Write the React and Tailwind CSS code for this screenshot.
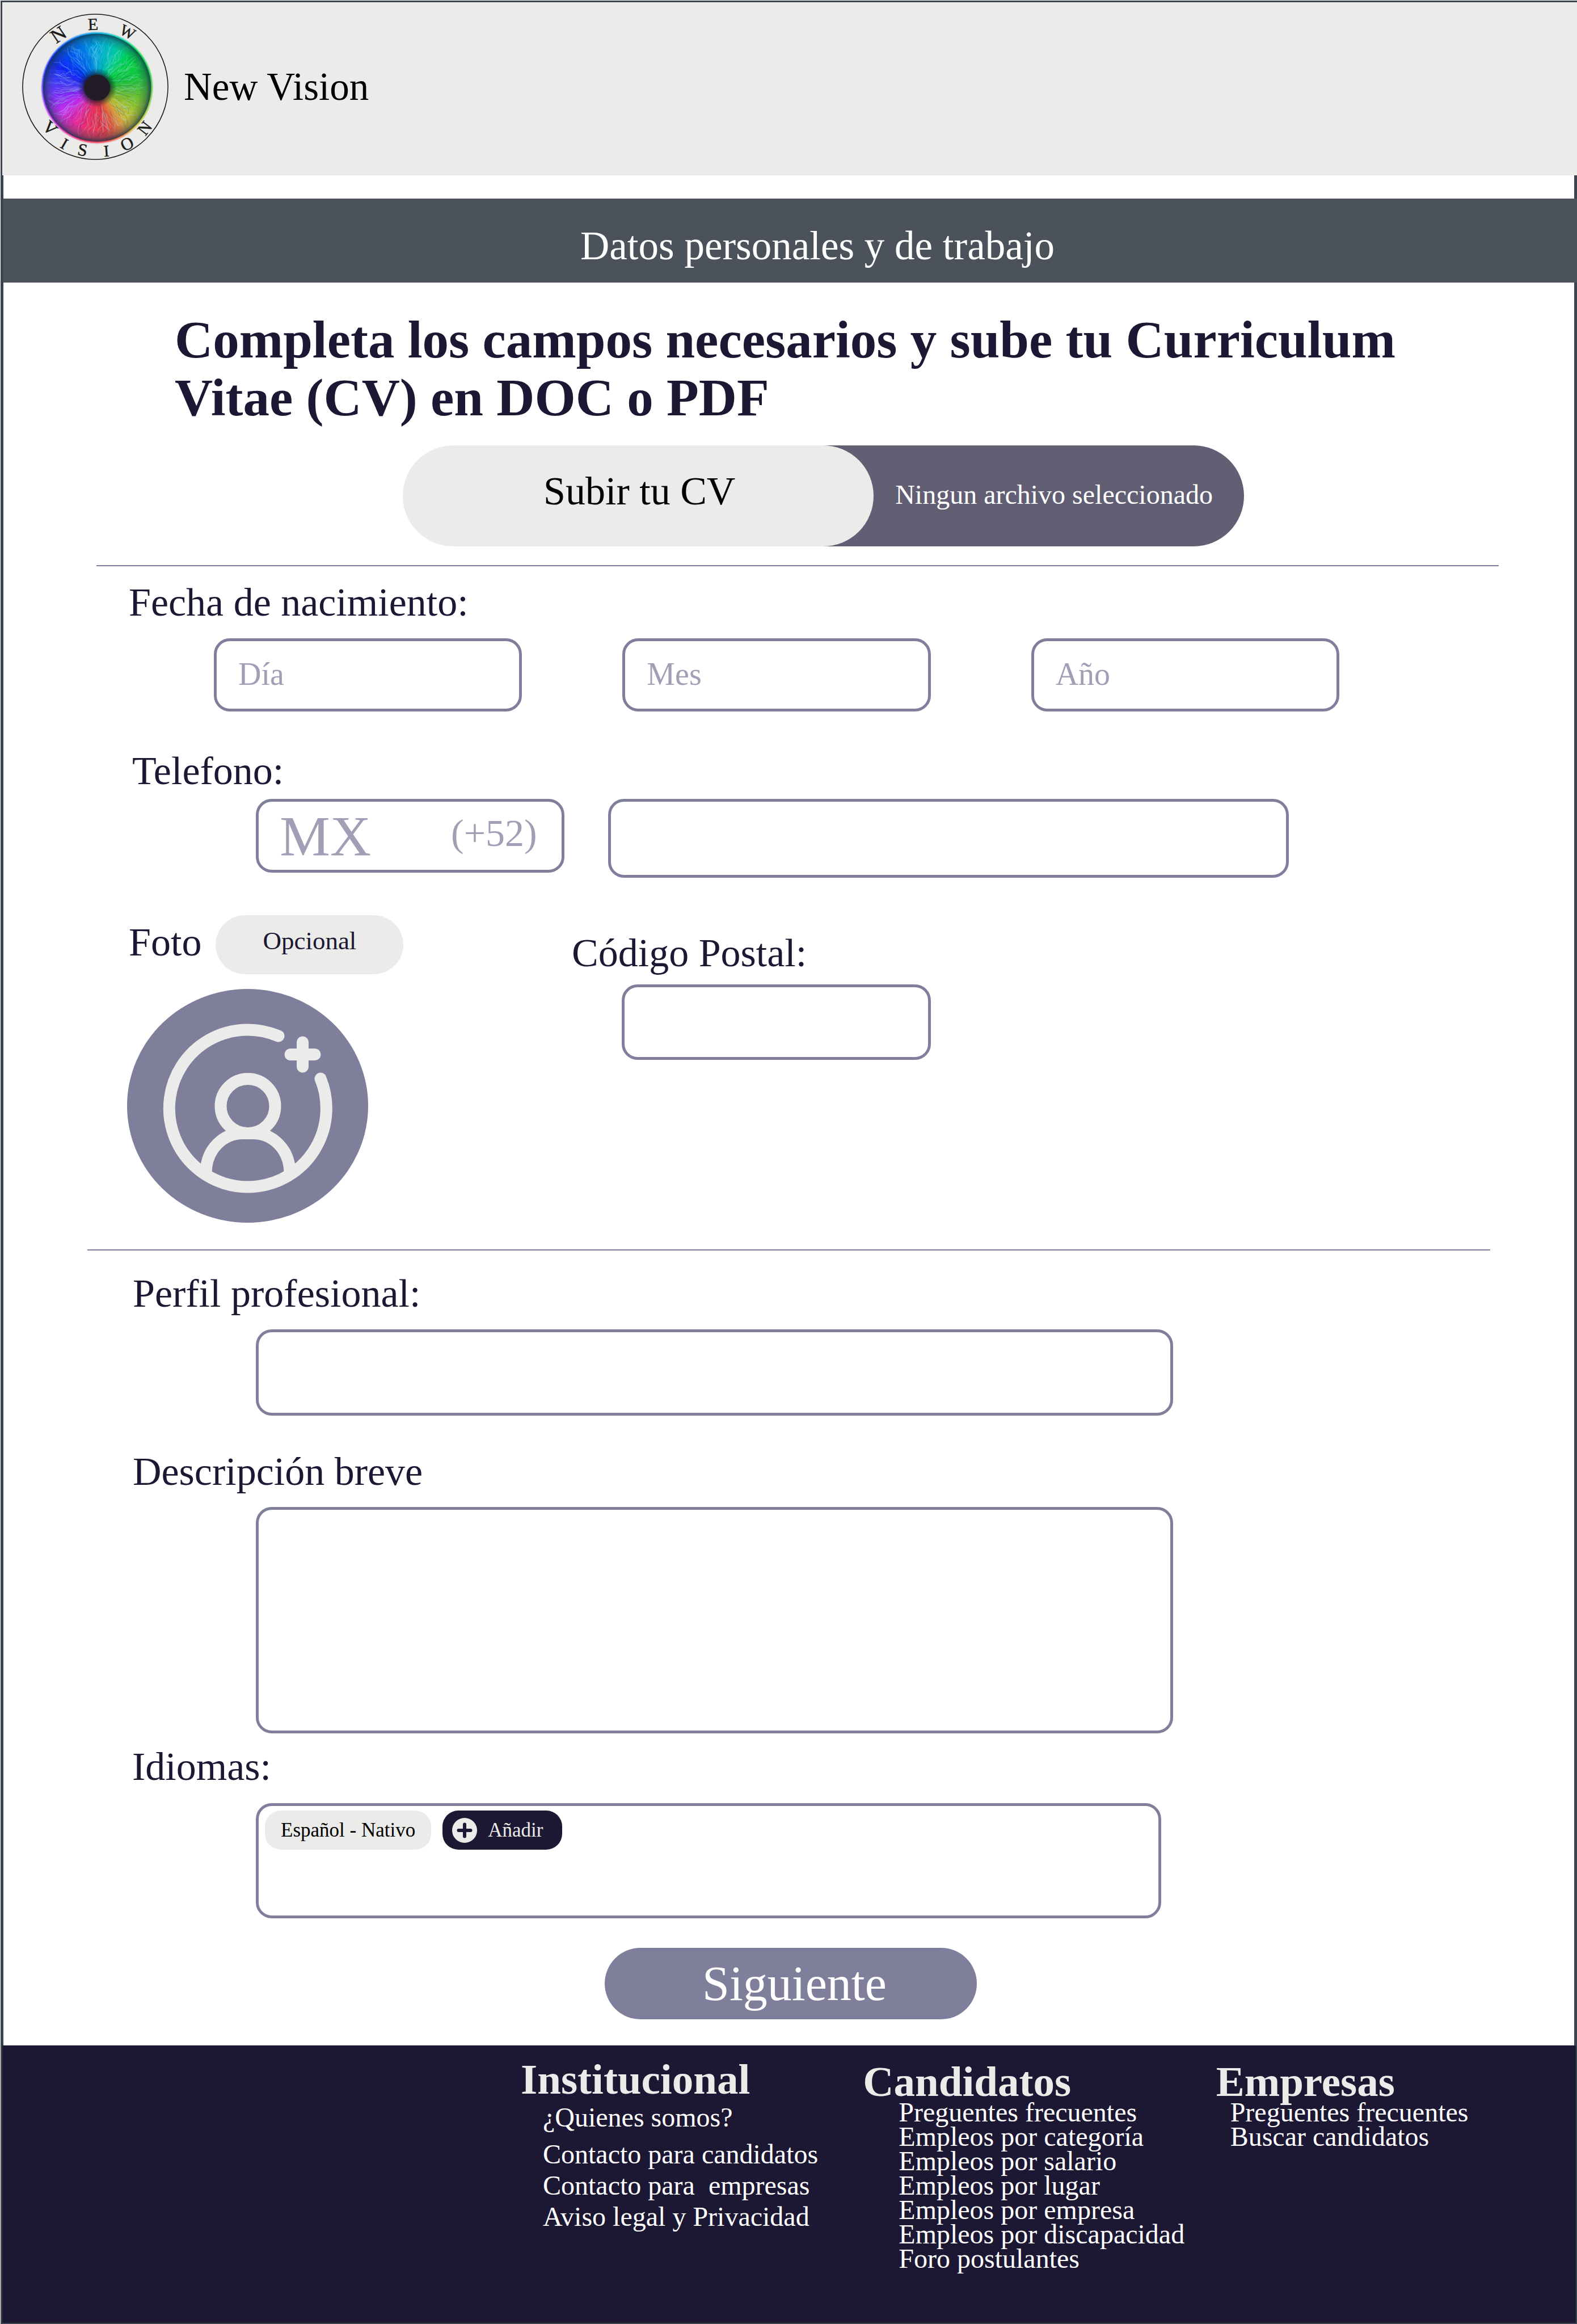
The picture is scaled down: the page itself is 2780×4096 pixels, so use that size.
import React from "react";

const FIELD =
  "block w-full rounded-[28px] border-[5px] border-[#7f7f9b] bg-white text-[#1c1733] placeholder:text-[#a09fb6] placeholder:opacity-100 outline-none";
const LABEL = "block text-[70px] leading-[80px] text-[#1c1733]";

const HUES = [
  [0, 0, 170, 225],
  [25, 0, 205, 175],
  [50, 0, 220, 70],
  [75, 20, 200, 60],
  [100, 100, 195, 50],
  [120, 160, 200, 40],
  [138, 215, 190, 50],
  [152, 235, 130, 60],
  [168, 242, 66, 70],
  [195, 244, 48, 105],
  [215, 235, 45, 170],
  [237, 205, 45, 245],
  [257, 140, 44, 255],
  [277, 76, 60, 255],
  [300, 16, 40, 255],
  [325, 0, 90, 245],
  [360, 0, 170, 225],
];

function hueAt(deg) {
  const a = ((deg % 360) + 360) % 360;
  const i = HUES.findIndex((h, n) => n > 0 && a <= h[0]);
  const lo = HUES[i - 1];
  const hi = HUES[i];
  const t = (a - lo[0]) / (hi[0] - lo[0]);
  const mix = (k) => Math.round(lo[k] + (hi[k] - lo[k]) * t);
  return `rgb(${mix(1)},${mix(2)},${mix(3)})`;
}

const CX = 487;
const CY = 467;

function point(deg, r) {
  const a = ((deg - 90) * Math.PI) / 180;
  return `${(CX + r * Math.cos(a)).toFixed(1)} ${(CY + r * Math.sin(a)).toFixed(1)}`;
}

const WEDGES = Array.from({ length: 120 }, (_, i) => ({
  d: `M${CX} ${CY}L${point(i * 3 - 0.6, 314)}L${point(i * 3 + 3.6, 314)}Z`,
  fill: hueAt(i * 3 + 1.5),
}));

function noise(n) {
  const v = Math.sin(n * 127.1 + 11.7) * 43758.5453;
  return v - Math.floor(v);
}

const FIBRES = Array.from({ length: 420 }, (_, i) => {
  const deg = noise(i) * 360;
  const start = 80 + noise(i + 400) * 130;
  const len = 40 + noise(i + 800) * 90;
  const end = Math.min(start + len, 285);
  const bend = (k) => (noise(i + k) - 0.5) * 9;
  const light = noise(i + 2000) > 0.4;
  return {
    d: `M${point(deg, start)}L${point(deg + bend(1200), start + (end - start) * 0.35)}L${point(deg + bend(1400), start + (end - start) * 0.7)}L${point(deg + bend(1600), end)}`,
    stroke: light ? "#a8ecff" : "#0a1c50",
    opacity: light ? 0.1 + noise(i + 2400) * 0.28 : 0.06 + noise(i + 2600) * 0.12,
    width: 1.5 + noise(i + 2800) * 3,
  };
});

const RING = [
  ["N", 268, 166, -34, 112],
  ["E", 464, 108, -2, 96],
  ["W", 660, 152, 27, 90],
  ["V", 220, 696, 44, 100],
  ["I", 301, 785, 30, 92],
  ["S", 405, 820, 10, 98],
  ["I", 540, 826, -4, 92],
  ["O", 657, 786, -26, 98],
  ["N", 757, 697, -52, 96],
];

function Logo() {
  return (
    <svg viewBox="62 47 830 830" className="size-[258px] shrink-0" role="img" aria-label="New Vision">
      <defs>
        <radialGradient id="rim" cx={CX} cy={CY} r="306" gradientUnits="userSpaceOnUse">
          <stop offset="0" stopColor="#101828" stopOpacity="1" />
          <stop offset="0.24" stopColor="#101828" stopOpacity="0.7" />
          <stop offset="0.36" stopColor="#101828" stopOpacity="0.05" />
          <stop offset="0.78" stopColor="#1c3c50" stopOpacity="0.03" />
          <stop offset="0.92" stopColor="#1c3c50" stopOpacity="0.38" />
          <stop offset="1" stopColor="#123048" stopOpacity="0.8" />
        </radialGradient>
        <filter id="soft" x="-10%" y="-10%" width="120%" height="120%">
          <feGaussianBlur stdDeviation="3" />
        </filter>
        <filter id="fine" x="-5%" y="-5%" width="110%" height="110%">
          <feGaussianBlur stdDeviation="1" />
        </filter>
      </defs>
      <circle cx="477" cy="462" r="412" fill="none" stroke="#1a1a18" strokeWidth="5" />
      <g filter="url(#soft)">
        {WEDGES.map((w, i) => (
          <path key={i} d={w.d} fill={w.fill} />
        ))}
      </g>
      <g filter="url(#fine)" fill="none" strokeLinejoin="round" strokeLinecap="round">
        {FIBRES.map((f, i) => (
          <path key={i} d={f.d} stroke={f.stroke} strokeOpacity={f.opacity} strokeWidth={f.width} />
        ))}
      </g>
      <circle cx={CX} cy={CY} r="306" fill="url(#rim)" filter="url(#fine)" />
      <circle cx={CX} cy={CY} r="74" fill="#241d26" filter="url(#fine)" />
      <g fill="#1a1a18" textAnchor="middle" fontFamily="'Liberation Serif', serif">
        {RING.map(([ch, x, y, rot, size], i) => (
          <text
            key={i}
            x={x}
            y={y + size * 0.33}
            fontSize={size}
            transform={`rotate(${rot} ${x} ${y})`}
            stroke="#1a1a18"
            strokeWidth="1.5"
          >
            {ch}
          </text>
        ))}
      </g>
    </svg>
  );
}

function AddPhoto() {
  return (
    <svg viewBox="0 0 425 412" className="block h-[412px] w-[425px]" aria-hidden="true">
      <ellipse cx="212.5" cy="206" rx="212.5" ry="206" fill="#7f7f9b" />
      <g fill="none" stroke="#ebebe9" strokeWidth="21" strokeLinecap="round">
        <path d="M267 83A138.500 138.500 0 1 0 341 158" />
        <path d="M309.500 94V137M288 115.500H331" />
        <circle cx="213" cy="206.500" r="48" />
        <path strokeLinecap="butt" d="M139 325C139 282 170 254.500 204 254.500H222C256 254.500 287 282 287 325" />
      </g>
    </svg>
  );
}

function PlusBadge() {
  return (
    <svg viewBox="0 0 44 44" className="size-11 shrink-0" aria-hidden="true">
      <circle cx="22" cy="22" r="22" fill="#ebebe9" />
      <path d="M22 11.500V32.500M11.500 22H32.500" stroke="#1c1733" strokeWidth="6" strokeLinecap="round" />
    </svg>
  );
}

function FooterColumn({ title, items, top, list, first = "" }) {
  return (
    <section className={top}>
      <h2 className="text-[75px] leading-[64px] font-bold text-[#ebebe9]">{title}</h2>
      <ul className={list}>
        {items.map((t, i) => (
          <li key={t} className={i === 0 ? first : ""}>
            <a href="#" className="whitespace-pre">
              {t}
            </a>
          </li>
        ))}
      </ul>
    </section>
  );
}

export default function App() {
  return (
    <div className="flex min-h-screen flex-col bg-white pt-px pl-px font-['Liberation_Serif',serif]">
      <header className="flex items-center gap-[27px] border-t-[3px] border-l-[3px] border-[#3b4450] bg-[#ebebe9] pt-5 pb-[27px] pl-[35px]">
        <Logo />
        <span className="text-[69px] leading-[80px] text-black">New Vision</span>
      </header>

      <main className="border-x-[5px] border-[#3b4450] pt-[41px] pb-[46px]">
        <h2 className="-mr-[5px] bg-[#4c525c] pt-[43px] pb-[25px] pl-[96px] text-center text-[71px] leading-[80px] text-white">
          Datos personales y de trabajo
        </h2>

        <h1 className="mt-[50px] pr-[240px] pl-[302px] text-[93px] leading-[102px] font-bold text-[#1c1733]">
          Completa los campos necesarios y sube tu Curriculum Vitae (CV) en DOC o PDF
        </h1>

        <form onSubmit={(e) => e.preventDefault()}>
          <div className="mt-[33px] mr-[582px] ml-[704px] flex h-[178px]">
            <button
              type="button"
              className="relative z-10 w-[56%] rounded-full bg-[#ebebe9] pb-4 pl-1 text-[70px] leading-[80px] text-black"
            >
              Subir tu CV
            </button>
            <output className="-ml-[100px] flex flex-1 items-center justify-end rounded-r-full bg-[#625f74] pr-[55px] pb-1 text-[48px] leading-[60px] text-white">
              Ningun archivo seleccionado
            </output>
          </div>

          <hr className="mt-[33px] mr-[133px] ml-[164px] border-t-2 border-[#7f7f9b]" />

          <fieldset className="mt-[24px]">
            <legend className={`${LABEL} pl-[221px]`}>Fecha de nacimiento:</legend>
            <div className="mt-[23px] grid grid-cols-3 gap-[177px] pr-[414px] pl-[371px]">
              <input aria-label="Día" placeholder="Día" className={`${FIELD} h-[129px] pr-6 pb-1 pl-[38px] text-[56px]`} />
              <input aria-label="Mes" placeholder="Mes" className={`${FIELD} h-[129px] pr-6 pb-1 pl-[38px] text-[56px]`} />
              <input aria-label="Año" placeholder="Año" className={`${FIELD} h-[129px] pr-6 pb-1 pl-[38px] text-[56px]`} />
            </div>
          </fieldset>

          <label htmlFor="telefono" className={`${LABEL} mt-[65px] pl-[227px]`}>
            Telefono:
          </label>
          <div className="mt-[9px] grid grid-cols-[minmax(0,544fr)_minmax(0,1200fr)] items-start gap-[77px] pr-[503px] pl-[445px]">
            <div className={`${FIELD} h-[130px]`}>
              <div className="flex h-full pl-[37px]">
                <input
                  aria-label="País"
                  placeholder="MX"
                  className="h-full w-[302px] min-w-0 text-[100px] outline-none placeholder:text-[#a09fb6] placeholder:opacity-100"
                />
                <input
                  aria-label="Código de país"
                  placeholder="(+52)"
                  className="h-full min-w-0 flex-1 pb-2.5 text-[68px] outline-none placeholder:text-[#a09fb6] placeholder:opacity-100"
                />
              </div>
            </div>
            <input id="telefono" type="tel" className={`${FIELD} h-[139px] px-8 text-[56px]`} />
          </div>

          <div className="mt-[66px] grid grid-cols-[1002fr_1767fr]">
            <div className="pl-[218px]">
              <div className="flex h-[104px] items-center gap-[25px] pl-[3px]">
                <label htmlFor="foto" className={`${LABEL} pb-2`}>
                  Foto
                </label>
                <span className="flex h-full w-[331px] items-center justify-center rounded-full bg-[#ebebe9] pb-3.5 text-[45px] leading-[60px] text-[#1c1733]">
                  Opcional
                </span>
              </div>
              <button id="foto" type="button" aria-label="Añadir foto" className="mt-[26px] block rounded-full">
                <AddPhoto />
              </button>
            </div>
            <div className="pt-[27px]">
              <label htmlFor="postal" className={LABEL}>
                Código Postal:
              </label>
              <div className="mt-[15px] ml-[88px] w-[545px]">
                <input id="postal" className={`${FIELD} h-[133px] px-8 text-[56px]`} />
              </div>
            </div>
          </div>

          <hr className="mx-[148px] mt-[47px] border-t-2 border-[#7f7f9b]" />

          <label htmlFor="perfil" className={`${LABEL} mt-9 pl-[228px]`}>
            Perfil profesional:
          </label>
          <div className="mt-[23px] pr-[707px] pl-[445px]">
            <input id="perfil" className={`${FIELD} h-[152px] px-8 text-[56px]`} />
          </div>

          <label htmlFor="descripcion" className={`${LABEL} mt-[59px] pl-[228px]`}>
            Descripción breve
          </label>
          <div className="mt-[22px] pr-[707px] pl-[445px]">
            <textarea id="descripcion" className={`${FIELD} h-[399px] resize-none px-8 py-4 text-[56px]`} />
          </div>

          <h3 id="idiomas" className={`${LABEL} mt-[19px] pl-[227px]`}>
            Idiomas:
          </h3>
          <div className="mt-6 pr-[728px] pl-[445px]">
            <div role="group" aria-labelledby="idiomas" className={`${FIELD} h-[203px]`}>
              <div className="flex gap-5 pt-2 pl-[11px] text-[35px] leading-[44px]">
                <span className="flex h-[69px] items-center rounded-[28px] bg-[#ebebe9] px-[28px] text-black">
                  Español - Nativo
                </span>
                <button
                  type="button"
                  className="flex h-[69px] items-center gap-[19px] rounded-[28px] bg-[#1c1733] pr-[34px] pl-[17px] text-[#ebebe9]"
                >
                  <PlusBadge />
                  Añadir
                </button>
              </div>
            </div>
          </div>

          <div className="mt-[52px] flex justify-center pl-1.5">
            <button
              type="submit"
              className="h-[126px] w-[656px] rounded-full bg-[#7f7f9b] pl-3.5 text-[86px] leading-[100px] text-white"
            >
              Siguiente
            </button>
          </div>
        </form>
      </main>

      <footer className="grid flex-1 grid-cols-[603fr_622fr_634fr] border-r-2 border-b-2 border-l-[3px] border-[#3b4450] bg-[#1c1733] pl-[914px] text-[48px] text-white">
        <FooterColumn
          title="Institucional"
          top="pt-[28px]"
          list="mt-[7px] pl-[39px] leading-[55px]"
          first="mb-2.5"
          items={["¿Quienes somos?", "Contacto para candidatos", "Contacto para  empresas", "Aviso legal y Privacidad"]}
        />
        <FooterColumn
          title="Candidatos"
          top="pt-[32px]"
          list="pl-[63px] leading-[43px]"
          items={[
            "Preguentes frecuentes",
            "Empleos por categoría",
            "Empleos por salario",
            "Empleos por lugar",
            "Empleos por empresa",
            "Empleos por discapacidad",
            "Foro postulantes",
          ]}
        />
        <FooterColumn
          title="Empresas"
          top="pt-[32px]"
          list="pl-[25px] leading-[43px]"
          items={["Preguentes frecuentes", "Buscar candidatos"]}
        />
      </footer>
    </div>
  );
}
